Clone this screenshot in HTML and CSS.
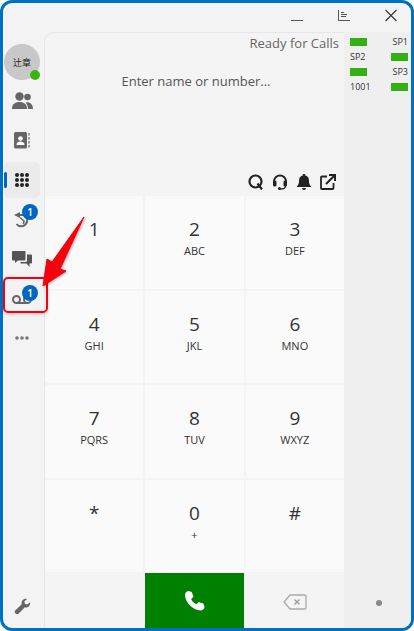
FILE: index.html
```html
<!DOCTYPE html>
<html>

<head>
    <title>Softphone</title>
    <link rel="stylesheet" href="styles.css">
</head>

<body>
    <div class="window">
        <div class="titlebar">
            <span class="win-btn"><svg width="14" height="14" viewBox="0 0 14 14"><path d="M1 12.500h12" stroke="#555" fill="none"/></svg></span>
            <span class="win-btn"><svg width="14" height="14" viewBox="0 0 14 14"><path d="M1.500 2v10.500h11.500M4 4.500h3M4 6.500h6M4 8.500h5" stroke="#555" fill="none"/></svg></span>
            <span class="win-btn"><svg width="14" height="14" viewBox="0 0 14 14"><path d="M1.500 2l11 11M12.500 2l-11 11" stroke="#333" stroke-width="1.100" fill="none"/></svg></span>
        </div>
        <div class="content">
            <div class="sidebar">
                <div class="avatar">辻章<span class="presence"></span></div>
                <div class="nav-item"><svg width="21" height="17" viewBox="0 0 21 17"><circle cx="7.500" cy="4.500" r="4.200" fill="#666"/><circle cx="15.500" cy="5" r="3.300" fill="#666"/><path d="M0 17c0-5 3-7 7.500-7s7.500 2 7.500 7z" fill="#666"/><path d="M16 17c0-3-1-5-2.500-6.500 4-1 7.500 1.500 7.500 6.500z" fill="#666"/></svg></div>
                <div class="nav-item"><svg width="16" height="17" viewBox="0 0 16 17"><rect x="0" y="0" width="13" height="16.500" rx="1.500" fill="#666"/><circle cx="6.500" cy="6.500" r="2.300" fill="#fff"/><path d="M2.500 13c0-2.700 2-3.500 4-3.500s4 .8 4 3.500z" fill="#fff"/><path d="M15 1v15" stroke="#666" stroke-width="1.200" stroke-dasharray="2.500 1.500"/></svg></div>
                <div class="nav-item active">
                    <svg width="14" height="14" viewBox="0 0 14 14" fill="#222"><circle cx="2" cy="2" r="2"/><circle cx="7" cy="2" r="2"/><circle cx="12" cy="2" r="2"/><circle cx="2" cy="7" r="2"/><circle cx="7" cy="7" r="2"/><circle cx="12" cy="7" r="2"/><circle cx="2" cy="12" r="2"/><circle cx="7" cy="12" r="2"/><circle cx="12" cy="12" r="2"/></svg>
                </div>
                <div class="nav-item"><svg class="history" width="17" height="16" viewBox="0 0 17 16"><path d="M0 3l6-3v6z" fill="#666"/><path d="M5 3h5a6 6 0 1 1-7.500 9" stroke="#666" stroke-width="2" fill="none"/><path d="M6 5.500l4 3.500-.5 3" stroke="#666" stroke-width="1.600" fill="none"/></svg><span class="badge">1</span></div>
                <div class="nav-item"><svg width="20" height="16" viewBox="0 0 20 16"><path d="M1 0h11.500a1 1 0 0 1 1 1v7.500a1 1 0 0 1-1 1H6l-3 2.500V9.500H1a1 1 0 0 1-1-1V1a1 1 0 0 1 1-1z" fill="#555"/><path d="M15 3.500h4a1 1 0 0 1 1 1v7a1 1 0 0 1-1 1h-1.500V16l-3-3.500H8.500v-1.500h5a1.500 1.500 0 0 0 1.500-1.500z" fill="#555"/></svg></div>
                <div class="nav-item"><svg class="voicemail" width="20" height="9" viewBox="0 0 20 9"><circle cx="4.500" cy="4.500" r="3.500" stroke="#666" stroke-width="2" fill="none"/><circle cx="15.500" cy="4.500" r="3.500" stroke="#666" stroke-width="2" fill="none"/><path d="M4.500 8h11" stroke="#666" stroke-width="2"/></svg><span class="badge low">1</span></div>
                <div class="nav-item"><svg width="14" height="4" viewBox="0 0 14 4" fill="#777"><circle cx="2" cy="2" r="1.800"/><circle cx="7" cy="2" r="1.800"/><circle cx="12" cy="2" r="1.800"/></svg></div>
                <div class="wrench"><svg width="17" height="17" viewBox="0 0 18 18"><path d="M17 4.500l-3 2.500-2.500-1-.5-2.500L14 1c-3-1-6 1-6 4 0 1 .2 1.500.2 1.500L1.500 13c-1 1-1 2.500 0 3.500s2.500 1 3.500 0l6.500-6.700c3 1 6-1.300 5.500-5.300z" fill="#666"/></svg></div>
            </div>

            <div class="main">
                <div class="display">
                    <div class="status">Ready for Calls</div>
                    <div class="number">Enter name or number...</div>
                    <div class="tools">
                        <svg width="16" height="16" viewBox="0 0 16 16"><circle cx="7.500" cy="7.500" r="6" stroke="#222" stroke-width="2.200" fill="none"/><path d="M9.500 9.500l4.500 6" stroke="#222" stroke-width="2.200"/></svg>
                        <svg width="16" height="16" viewBox="0 0 16 16"><path d="M2 10V7.500a6 6 0 0 1 12 0V10" stroke="#222" stroke-width="1.800" fill="none"/><rect x="1" y="6.500" width="3.500" height="6" rx="1.500" fill="#222"/><rect x="11.500" y="6.500" width="3.500" height="6" rx="1.500" fill="#222"/><path d="M13.500 12c0 2-2 3-5 3" stroke="#222" stroke-width="1.300" fill="none"/><circle cx="7.500" cy="14.500" r="1.500" fill="#222"/></svg>
                        <svg width="16" height="16" viewBox="0 0 15 16" fill="#222"><path d="M7.500 0a1.300 1.300 0 0 1 1.300 1.500C11.500 2 12.500 4 12.500 7c0 3 1 4.500 2.500 6H0c1.500-1.500 2.500-3 2.500-6 0-3 1-5 3.700-5.500A1.300 1.300 0 0 1 7.500 0z"/><path d="M5.500 14h4a2 2 0 0 1-4 0z"/></svg>
                        <svg width="16" height="16" viewBox="0 0 16 16"><path d="M7 2.500H2a1 1 0 0 0-1 1V14a1 1 0 0 0 1 1h10.500a1 1 0 0 0 1-1V9" stroke="#222" stroke-width="1.800" fill="none"/><path d="M6 10l8.500-8.500M9 1h6v6" stroke="#222" stroke-width="2" fill="none"/></svg>
                    </div>
                </div>
                <div class="keypad">
                    <div class="key"><span class="digit">1</span></div>
                    <div class="key"><span class="digit">2</span><span class="letters">ABC</span></div>
                    <div class="key"><span class="digit">3</span><span class="letters">DEF</span></div>
                    <div class="key"><span class="digit">4</span><span class="letters">GHI</span></div>
                    <div class="key"><span class="digit">5</span><span class="letters">JKL</span></div>
                    <div class="key"><span class="digit">6</span><span class="letters">MNO</span></div>
                    <div class="key"><span class="digit">7</span><span class="letters">PQRS</span></div>
                    <div class="key"><span class="digit">8</span><span class="letters">TUV</span></div>
                    <div class="key"><span class="digit">9</span><span class="letters">WXYZ</span></div>
                    <div class="key"><span class="digit">*</span></div>
                    <div class="key"><span class="digit">0</span><span class="letters">+</span></div>
                    <div class="key"><span class="digit">#</span></div>
                </div>
                <div class="call-row">
                    <div></div>
                    <div class="call-btn"><svg width="21" height="21" viewBox="0 0 22 22"><path d="M5 1l3 1 2 5-2.500 2.500c1 2.500 3 4.500 5.500 5.500L15.500 12.500l5 2 1 3c0 2-2 4-4 4C9 21 1 13 1 5c0-2 2-4 4-4z" fill="#fff"/></svg></div>
                    <div class="back-btn"><svg width="24" height="16" viewBox="0 0 24 16"><path d="M7 1h15a1 1 0 0 1 1 1v12a1 1 0 0 1-1 1H7L1 8z" stroke="#aaa" stroke-width="1.300" fill="none"/><path d="M11.500 5.500l5 5M16.500 5.500l-5 5" stroke="#999" stroke-width="1.300"/></svg></div>
                </div>
            </div>

            <div class="lines">
                <div class="line-grid">
                    <span class="led"></span><span class="line-name right">SP1</span>
                    <span class="line-name">SP2</span><span class="led right"></span>
                    <span class="led"></span><span class="line-name right">SP3</span>
                    <span class="line-name">1001</span><span class="led right"></span>
                </div>
                <span class="dot"></span>
            </div>
        </div>

        <div class="highlight"></div>
        <svg class="arrow" width="46" height="76" viewBox="0 0 46 76"><path d="M43 2L19 54l6 2L2 71l4-27 5 3z" fill="#f5000d" stroke="#f5000d" stroke-width="1" stroke-linejoin="round"/></svg>
    </div>
</body>

</html>
```

FILE: styles.css
```css
* {
    box-sizing: border-box;
}

html, body {
    height: 100%;
}

body {
    margin: 0;
    background-color: #fff;
    font-family: "Open Sans", sans-serif;
    color: #333;
}

.window {
    position: relative;
    height: 631px;
    border: 3px solid #0070c0;
    border-radius: 12px;
    background-color: #f3f3f3;
    display: flex;
    flex-direction: column;
    overflow: hidden;
}

.titlebar {
    height: 29px;
    flex: none;
    display: flex;
    justify-content: flex-end;
    gap: 27px;
    padding-right: 10px;
}

.win-btn {
    width: 20px;
    padding-top: 5px;
    display: flex;
    justify-content: center;
    align-items: flex-start;
}

.content {
    flex: 1;
    display: flex;
    min-height: 0;
}

.sidebar {
    width: 41px;
    flex: none;
    padding-right: 3px;
    display: flex;
    flex-direction: column;
    align-items: center;
    gap: 3.600px;
}

.avatar {
    width: 36px;
    height: 36px;
    margin-top: 12px;
    margin-bottom: -1px;
    border-radius: 50%;
    background-color: #c8c8c8;
    font-family: "Noto Sans CJK SC", sans-serif;
    font-size: 9px;
    color: #222;
    display: flex;
    align-items: center;
    justify-content: center;
    position: relative;
}

.presence {
    position: absolute;
    right: 0;
    bottom: 0;
    width: 10px;
    height: 10px;
    border-radius: 50%;
    background-color: #3cb310;
}

.nav-item {
    width: 36px;
    height: 36px;
    flex: none;
    display: flex;
    align-items: center;
    justify-content: center;
    position: relative;
}

.nav-item.active {
    background-color: #ebebeb;
    border-radius: 5px;
}

.nav-item.active::before {
    content: "";
    position: absolute;
    left: 0;
    top: 10px;
    width: 3px;
    height: 16px;
    border-radius: 2px;
    background-color: #0067c0;
}

.history {
    margin-top: 2px;
}

.voicemail {
    margin-top: 2px;
}

.badge {
    position: absolute;
    right: 2px;
    top: 3px;
    width: 16px;
    height: 16px;
    border-radius: 50%;
    background-color: #0067c0;
    color: #fff;
    font-size: 10px;
    font-weight: 600;
    display: flex;
    align-items: center;
    justify-content: center;
}

.badge.low {
    top: 4px;
}

.wrench {
    margin-top: auto;
    margin-bottom: 13px;
    display: flex;
}

.main {
    width: 300px;
    flex: none;
    display: flex;
    flex-direction: column;
    border-left: 1px solid #e6e6e6;
    border-top: 1px solid #e6e6e6;
    border-top-left-radius: 10px;
    background-color: #f4f4f4;
}

.display {
    height: 163px;
    flex: none;
    display: flex;
    flex-direction: column;
    padding: 1px 5px 6px 0;
}

.status {
    text-align: right;
    font-size: 13px;
    color: #666;
}

.number {
    margin-top: 20px;
    padding-left: 8px;
    text-align: center;
    font-size: 13px;
    color: #555;
}

.tools {
    margin-top: auto;
    display: flex;
    justify-content: flex-end;
    align-items: center;
    gap: 8px;
    padding-right: 3px;
}

.keypad {
    flex: 1;
    display: grid;
    grid-template-columns: repeat(3, 1fr);
    grid-template-rows: repeat(4, 1fr);
    gap: 2px;
    min-height: 0;
}

.key {
    background-color: #fafafa;
    display: flex;
    flex-direction: column;
    align-items: center;
    padding-top: 20px;
}

.digit {
    font-size: 19px;
    line-height: 26px;
    color: #333;
}

.letters {
    margin-top: 2px;
    font-size: 11px;
    line-height: 14px;
    color: #333;
}

.call-row {
    height: 55px;
    flex: none;
    margin-top: 1px;
    display: grid;
    grid-template-columns: repeat(3, 1fr);
    gap: 1px;
}

.call-btn {
    background-color: #008000;
    display: flex;
    align-items: center;
    justify-content: center;
}

.back-btn {
    padding-top: 3px;
    display: flex;
    align-items: center;
    justify-content: center;
}

.lines {
    flex: 1;
    background-color: #efefef;
    padding: 2px 3px 0 6px;
    display: flex;
    flex-direction: column;
    align-items: center;
}

.line-grid {
    width: 100%;
    display: grid;
    grid-template-columns: 1fr 1fr;
    grid-auto-rows: 15px;
    font-size: 9px;
    color: #333;
    align-items: center;
}

.led {
    width: 17px;
    height: 8px;
    background-color: #34b015;
}

.line-name.right {
    text-align: right;
}

.led.right {
    justify-self: end;
}

.dot {
    margin-top: auto;
    margin-bottom: 22px;
    width: 6px;
    height: 6px;
    border-radius: 50%;
    background-color: #888;
}

.highlight {
    position: absolute;
    left: 0;
    top: 274px;
    width: 45px;
    height: 36px;
    border: 2px solid #f5000d;
    border-radius: 5px;
    box-shadow: 0 1px 3px rgba(0, 0, 0, 0.25);
}

.arrow {
    position: absolute;
    left: 38px;
    top: 212px;
    filter: drop-shadow(1px 1px 1px rgba(0, 0, 0, 0.3));
}
```
